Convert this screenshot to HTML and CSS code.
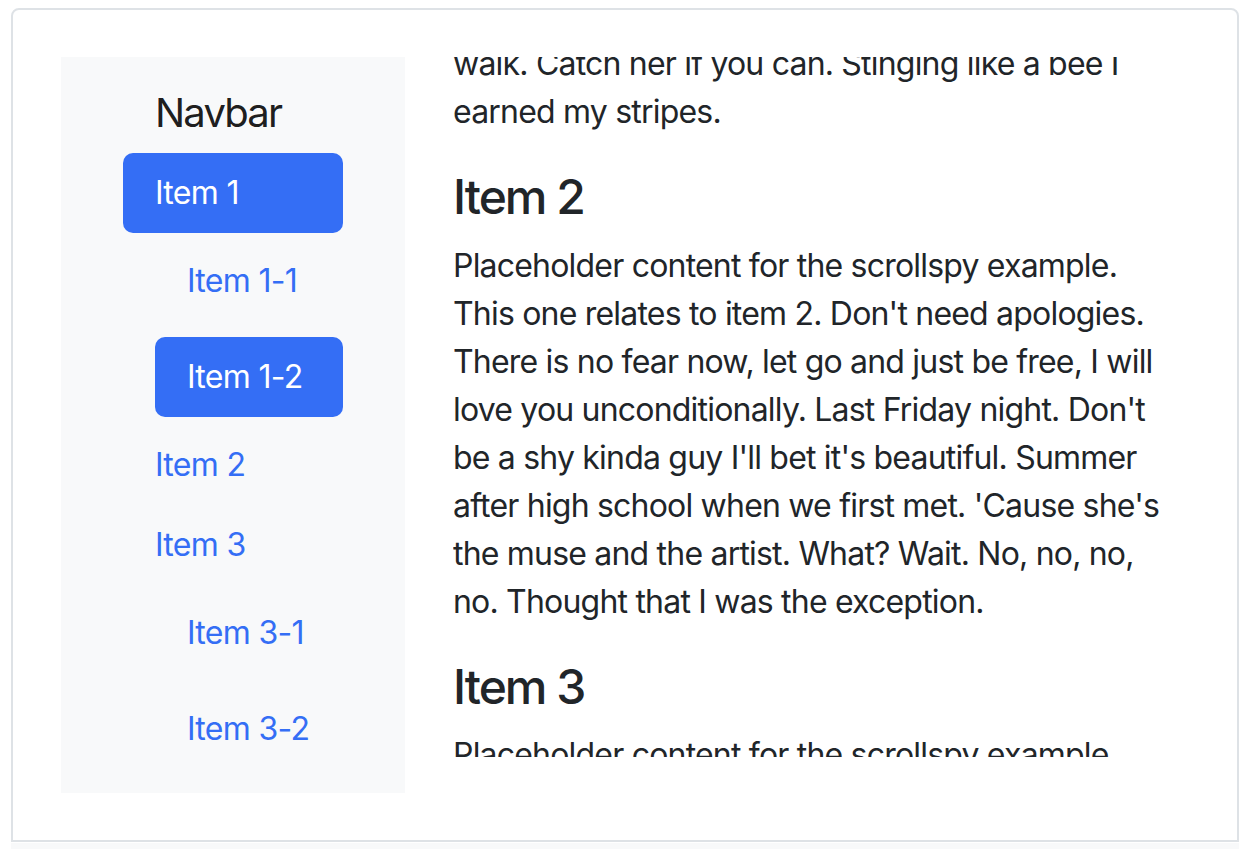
FILE: index.html
```html
<!DOCTYPE html>
<html lang="en">
<head>
<meta charset="utf-8">
<title>Scrollspy</title>
<link rel="stylesheet" href="styles.css">
</head>
<body>
<div class="page">
  <div class="example">
    <div class="row">
      <div class="col-nav">
        <nav class="sidenav">
          <a class="brand" href="#">Navbar</a>
          <div class="pills">
            <a class="pill active" href="#item-1">Item 1</a>
            <div class="pills sub">
              <a class="pill" href="#item-1-1">Item 1-1</a>
              <a class="pill active" href="#item-1-2">Item 1-2</a>
            </div>
            <a class="pill" href="#item-2">Item 2</a>
            <a class="pill" href="#item-3">Item 3</a>
            <div class="pills sub">
              <a class="pill" href="#item-3-1">Item 3-1</a>
              <a class="pill" href="#item-3-2">Item 3-2</a>
            </div>
          </div>
        </nav>
      </div>
      <div class="col-content">
        <div class="spy">
          <p class="lead-in">walk. Catch her if you can. Stinging like a bee I<br>earned my stripes.</p>
          <h4 id="item-2">Item 2</h4>
          <p>Placeholder content for the scrollspy example.<br>This one relates to item 2. Don't need apologies.<br>There is no fear now, let go and just be free, I will<br>love you unconditionally. Last Friday night. Don't<br>be a shy kinda guy I'll bet it's beautiful. Summer<br>after high school when we first met. 'Cause she's<br>the muse and the artist. What? Wait. No, no, no,<br>no. Thought that I was the exception.</p>
          <h4 id="item-3">Item 3</h4>
          <p>Placeholder content for the scrollspy example.<br>This one relates to item 3.</p>
        </div>
      </div>
    </div>
  </div>
  <div class="highlight"></div>
</div>
</body>
</html>
```
FILE: styles.css
```css
html, body {
  margin: 0;
  padding: 0;
  background: #ffffff;
}
body {
  font-family: Inter, "Noto Sans", "Liberation Sans", sans-serif;
  color: #212529;
}
.page {
  padding: 8px 8px 0 11px;
}
.example {
  border: 2px solid #dee2e6;
  border-radius: 8px 8px 0 0;
  padding: 47px 48px;
}
.row {
  display: flex;
  gap: 48px;
  align-items: flex-start;
}
.col-nav {
  width: 344px;
  flex: none;
}
.col-content {
  flex: 1;
  min-width: 0;
}
.sidenav {
  background: #f8f9fa;
  padding: 16px 62px;
  display: flex;
  flex-direction: column;
}
.brand {
  display: block;
  font-size: 40px;
  line-height: 60px;
  letter-spacing: -1.8px;
  padding: 10px 0;
  margin-left: 32px;
  color: rgba(0, 0, 0, 0.9);
  text-decoration: none;
  white-space: nowrap;
}
.pills {
  display: flex;
  flex-direction: column;
}
.pill {
  display: block;
  padding: 16px 32px;
  font-size: 32px;
  line-height: 48px;
  letter-spacing: -0.7px;
  color: #346ef5;
  text-decoration: none;
  border-radius: 10px;
  white-space: nowrap;
}
.sub .pill {
  margin: 8px 0 8px 32px;
}
.pill.active {
  background: #346ef5;
  color: #ffffff;
}
.spy {
  height: 700px;
  overflow: hidden;
  font-size: 32px;
  line-height: 48px;
  letter-spacing: -0.8px;
}
.spy p {
  margin: 0 0 32px;
  white-space: nowrap;
}
.spy p.lead-in {
  margin-top: -17px;
}
.spy h4 {
  font-size: 48px;
  font-weight: 500;
  line-height: 1.2;
  letter-spacing: -2px;
  margin: 0 0 16px;
}
.highlight {
  height: 8px;
  margin-top: 1px;
  background: #f8f9fa;
}
```
